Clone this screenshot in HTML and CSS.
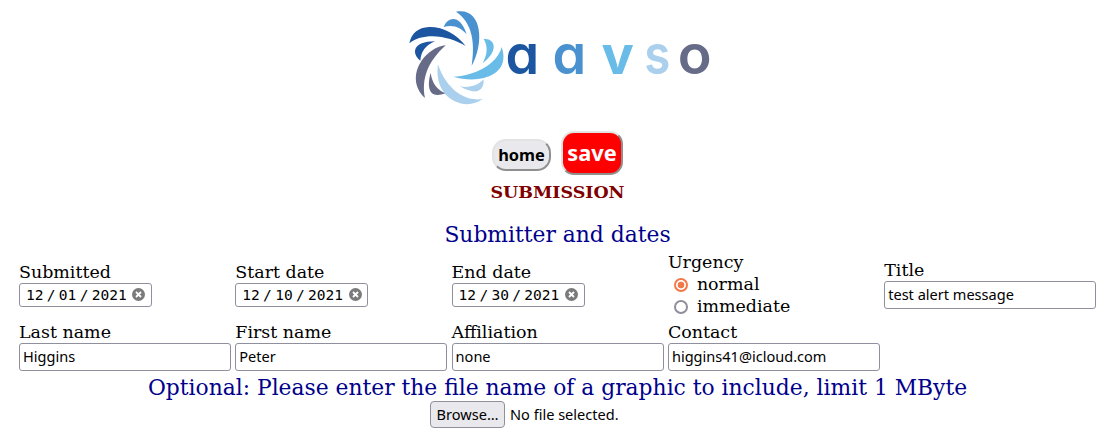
FILE: index.html
```html
<!DOCTYPE html>
<html lang="en">
<head>
<meta charset="utf-8">
<title>Submission</title>
<link rel="stylesheet" href="styles.css">
</head>
<body>
<header class="brand">
<svg class="logo" viewBox="400 0 320 115" role="img" aria-label="aavso">
<g transform="translate(400 0) scale(.33333)">
<path fill="#1c56a0" d="M28 130C34 100 55 82 87 81C129 80 171 103 197 138C153 111 76 93 28 130Z"/>
<path fill="#1c56a0" d="M61 182C34 161 37 124 105 124C78 135 63 153 61 182Z"/>
<path fill="#4991cf" d="M131 81C145 48 181 44 200 103C183 83 160 72 131 81Z"/>
<path fill="#4991cf" d="M168 35C243 20 256 122 215 198C225 133 220 70 168 35Z"/>
<path fill="#69bce8" d="M251 117C285 113 298 153 248 189C263 162 264 139 251 117Z"/>
<path fill="#69bce8" d="M305 141C334 226 240 254 160 230C221 228 292 194 305 141Z"/>
<path fill="#abd0ee" d="M251 238C253 276 226 286 179 259C207 264 233 258 251 238Z"/>
<path fill="#abd0ee" d="M114 193C128 239 174 308 248 297C196 337 99 298 114 193Z"/>
<path fill="#666b88" d="M137 136C75 142 10 232 75 294C64 238 82 186 137 136Z"/>
<path fill="#666b88" d="M92 219C80 260 86 299 136 280C113 271 96 250 92 219Z"/>
</g>
<g class="wordmark">
<text x="505.5" y="73.5" fill="#1c56a0">a</text><text x="552.5" y="73.5" fill="#4991cf">a</text><text x="601.5" y="73.5" fill="#69bce8" font-weight="700">v</text><text transform="translate(644.3 73.5) scale(.88 1)" fill="#abd0ee">s</text><text transform="translate(677.8 73.5) scale(1.03 1)" fill="#666b88">o</text>
</g>
</svg>
</header>
<nav class="actions"><button class="home">home</button><button class="save">save</button></nav>
<h1 class="title">SUBMISSION</h1>
<h2 class="heading">Submitter and dates</h2>
<main class="fields">
<div class="field"><span class="label">Submitted</span><div class="date"><span>12</span><span class="slash">/</span><span>01</span><span class="slash">/</span><span>2021</span><svg class="clear" viewBox="0 0 13 13"><circle cx="6.5" cy="6.5" r="6.5"/><path d="M4 4l5 5M9 4l-5 5"/></svg></div></div>
<div class="field"><span class="label">Start date</span><div class="date"><span>12</span><span class="slash">/</span><span>10</span><span class="slash">/</span><span>2021</span><svg class="clear" viewBox="0 0 13 13"><circle cx="6.5" cy="6.5" r="6.5"/><path d="M4 4l5 5M9 4l-5 5"/></svg></div></div>
<div class="field"><span class="label">End date</span><div class="date"><span>12</span><span class="slash">/</span><span>30</span><span class="slash">/</span><span>2021</span><svg class="clear" viewBox="0 0 13 13"><circle cx="6.5" cy="6.5" r="6.5"/><path d="M4 4l5 5M9 4l-5 5"/></svg></div></div>
<div class="field"><span class="label urgency">Urgency</span><label class="choice"><input type="radio" name="urgency" checked>normal</label><label class="choice"><input type="radio" name="urgency">immediate</label></div>
<div class="field"><label class="label" for="subject">Title</label><input class="text" id="subject" value="test alert message"></div>
<div class="field"><label class="label" for="last">Last name</label><input class="text" id="last" value="Higgins"></div>
<div class="field"><label class="label" for="first">First name</label><input class="text" id="first" value="Peter"></div>
<div class="field"><label class="label" for="aff">Affiliation</label><input class="text" id="aff" value="none"></div>
<div class="field"><label class="label" for="contact">Contact</label><input class="text" id="contact" value="higgins41@icloud.com"></div>
</main>
<h2 class="heading upload-heading">Optional: Please enter the file name of a graphic to include, limit 1 MByte</h2>
<div class="upload"><button class="browse">Browse…</button><span>No file selected.</span></div>
</body>
</html>
```
FILE: styles.css
```css
* { box-sizing: border-box; }
body { margin: 0; background: #fff; color: #000; font: 17.45px/20px "DejaVu Serif", serif; overflow: hidden; }
button, .text, .upload { font-family: "Noto Sans", sans-serif; }
.brand { height: 131px; padding-left: 400px; }
.logo { display: block; width: 320px; height: 115px; }
.wordmark { font: 600 54px Inter, sans-serif; font-feature-settings: "cv11"; }
.actions { display: flex; justify-content: center; align-items: flex-start; gap: 10px; height: 51px; padding-right: 1px; }
.home, .save { padding: 0; font-weight: 700; border: 2px outset #e3e3e3; }
.home { width: 59px; height: 32px; margin-top: 8px; border-radius: 14px; background: #e9e9ed; color: #000; font-size: 16.4px; line-height: 26px; }
.save { width: 62px; height: 44px; border-radius: 13px; background: #f00; color: #fff; font-size: 21.8px; line-height: 38px; }
.title { margin: 0; padding-right: 1px; text-align: center; font-size: 17.45px; line-height: 21px; color: #800000; }
.heading { margin: 19px 0 0; padding-right: 1px; text-align: center; font-size: 21.82px; line-height: 26px; font-weight: 400; color: #00008b; }
.fields { display: grid; grid-template-columns: repeat(5, 212.3px); grid-template-rows: 66px 50px; column-gap: 4px; row-gap: 4px; align-items: center; margin: 3px 0 0 19px; }
.field { display: flex; flex-direction: column; align-items: flex-start; }
.label { height: 21px; line-height: 20px; }
.text { width: 212px; height: 28px; padding: 0 3px 2px; border: 1px solid #8f8f9d; border-radius: 3px; font-size: 14.55px; color: #000; background: #fff; }
.date { display: flex; align-items: center; width: 133px; height: 24px; padding-left: 6px; border: 1px solid #8f8f9d; border-radius: 3px; font: 14.55px/22px "DejaVu Sans Mono", monospace; }
.slash { width: 15.3px; text-align: center; }
.clear { width: 13px; height: 13px; margin-left: 5.5px; fill: #7b7b7b; }
.clear path { stroke: #fff; stroke-width: 1.8; }
.urgency { height: 22px; line-height: 23px; }
.choice { display: flex; align-items: center; height: 22px; }
.choice input { appearance: none; width: 14px; height: 14px; margin: 1px 9px 0 6px; border: 2px solid #8f8f9d; border-radius: 50%; background: #fff; }
.choice input:checked { border-color: #f37849; background: radial-gradient(circle, #f37849 3px, #fff 3.7px); }
.upload-heading { margin-top: 4px; }
.upload { display: flex; margin-left: 430px; gap: 5px; font-size: 14.55px; line-height: 27px; }
.browse { width: 75px; height: 27px; padding: 0 0 1px; border: 1px solid #8f8f9d; border-radius: 4px; background: #e9e9ed; color: #000; font-size: 14.55px; }
```
